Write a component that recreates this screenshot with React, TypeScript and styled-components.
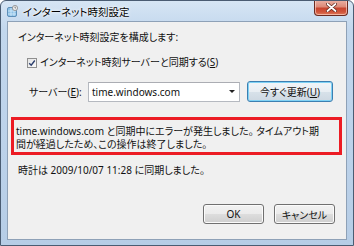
import styled, { createGlobalStyle } from "styled-components";

const GlobalStyle = createGlobalStyle`
  html, body {
    margin: 0;
    padding: 0;
    background: #ffffff;
  }
  body {
    font-family: "Noto Sans", "Noto Sans CJK JP", sans-serif;
    font-size: 10px;
    color: #111;
    font-feature-settings: "palt";
  }
`;

const Window = styled.div`
  box-sizing: border-box;
  width: 354px;
  height: 246px;
  border: 1px solid #4a5c72;
  border-radius: 6px 6px 0 0;
  background: linear-gradient(180deg, #d6e5f4 0%, #c2d7ed 12%, #bcd2ea 60%, #b6cde6 100%);
  display: flex;
  flex-direction: column;
  overflow: hidden;
`;

const TitleBar = styled.div`
  height: 20px;
  display: flex;
  align-items: center;
  padding-left: 6px;
`;

const TitleText = styled.span`
  margin-left: 5px;
  font-size: 10.5px;
  color: #000;
  text-shadow: 0 0 4px #ffffff, 0 0 2px #ffffff;
`;

const CloseButton = styled.div`
  box-sizing: border-box;
  margin-left: auto;
  margin-right: 5px;
  align-self: flex-start;
  margin-top: -1px;
  width: 34px;
  height: 16px;
  border: 1px solid #6b2a20;
  border-top: none;
  border-radius: 0 0 4px 4px;
  background: linear-gradient(180deg, #eab2a5 0%, #dd8a78 45%, #c8452f 55%, #d0553b 80%, #e07c5c 100%);
  box-shadow: inset 0 0 0 1px rgba(255, 220, 210, 0.6);
  display: flex;
  align-items: center;
  justify-content: center;
`;

const Client = styled.div`
  flex: 1;
  margin: 0 6px 5px 6px;
  border: 1px solid #8ea1b7;
  background: #f0f0f0;
  padding: 9px 5px 0 10px;
  display: flex;
  flex-direction: column;
`;

const Line = styled.div`
  line-height: 13px;
  white-space: nowrap;
`;

const CheckRow = styled.label`
  margin-top: 12px;
  padding-left: 9px;
  display: flex;
  align-items: center;
  line-height: 13px;
`;

const CheckBox = styled.span`
  box-sizing: border-box;
  width: 10px;
  height: 10px;
  border: 1px solid #8f8f8f;
  background: linear-gradient(135deg, #e4e4e4, #fafafa);
  margin-right: 3px;
  display: flex;
  align-items: center;
  justify-content: center;
`;

const ServerRow = styled.div`
  margin-top: 12px;
  padding-left: 11px;
  display: flex;
  align-items: center;
  height: 21px;
`;

const FieldLabel = styled.span`
  width: 59px;
  flex: none;
  white-space: nowrap;
`;

const Combo = styled.div`
  box-sizing: border-box;
  width: 152px;
  height: 20px;
  border: 1px solid #b5b9c0;
  border-top-color: #abadb3;
  background: #fff;
  display: flex;
  align-items: center;
  padding-left: 3px;
`;

const Arrow = styled.span`
  margin-left: auto;
  margin-right: 4px;
  width: 0;
  height: 0;
  border-left: 3px solid transparent;
  border-right: 3px solid transparent;
  border-top: 3px solid #222;
`;

const Button = styled.div<{ $width: number; $default?: boolean }>`
  box-sizing: border-box;
  width: ${(p) => p.$width}px;
  height: ${(p) => (p.$default ? 21 : 20)}px;
  border: 1px solid ${(p) => (p.$default ? "#3c7fb1" : "#707070")};
  border-radius: 3px;
  background: ${(p) =>
    p.$default
      ? "linear-gradient(180deg, #f2f5f8 0%, #e8eef3 50%, #d8e2ea 50%, #cdd8e2 100%)"
      : "linear-gradient(180deg, #f2f2f2 0%, #ebebeb 50%, #dddddd 50%, #cfcfcf 100%)"};
  box-shadow: inset 0 0 0 1px ${(p) => (p.$default ? "#7fd2f5" : "#fbfbfb")};
  display: flex;
  align-items: center;
  justify-content: center;
  white-space: nowrap;
`;

const UpdateButton = styled(Button)`
  margin-left: 7px;
`;

const ErrorBox = styled.div`
  margin: 15px -1px 0 -7px;
  border: 3px solid #ec1c24;
  padding: 5px 2px 1px 2px;
  line-height: 13px;
  white-space: nowrap;
`;

const ClockLine = styled(Line)`
  margin-top: 9px;
`;

const ButtonRow = styled.div`
  margin-top: 27px;
  margin-right: 6px;
  display: flex;
  justify-content: flex-end;
  gap: 10px;
`;

const u = { textDecoration: "underline" };

const TitleIcon = () => (
  <svg width="11" height="12" viewBox="0 0 11 12">
    <rect x="0.5" y="2.5" width="9" height="9" rx="1.5" fill="#8cc0e6" stroke="#5d8fb8" />
    <path d="M1 6h8M1 9h8M4 3v8M7 3v8" stroke="#d6ecfa" strokeWidth="0.8" />
    <circle cx="8" cy="3" r="2.6" fill="#e8e8e8" stroke="#8a8a8a" strokeWidth="0.8" />
    <path d="M8 1.6V3h1" stroke="#555" strokeWidth="0.6" fill="none" />
  </svg>
);

const CloseIcon = () => (
  <svg width="11" height="9" viewBox="0 0 11 9">
    <path d="M1.5 1L9.5 8M9.5 1L1.5 8" stroke="#5a2318" strokeWidth="3.2" strokeLinecap="round" />
    <path d="M1.5 1L9.5 8M9.5 1L1.5 8" stroke="#ffffff" strokeWidth="1.8" strokeLinecap="round" />
  </svg>
);

const CheckMark = () => (
  <svg width="8" height="8" viewBox="0 0 8 8">
    <path d="M1.2 4.2L3.2 6.2L6.8 1.5" stroke="#2c3f6e" strokeWidth="1.4" fill="none" />
  </svg>
);

const App = () => {
  return (
    <>
      <GlobalStyle />
      <Window>
        <TitleBar>
          <TitleIcon />
          <TitleText>インターネット時刻設定</TitleText>
          <CloseButton>
            <CloseIcon />
          </CloseButton>
        </TitleBar>
        <Client>
          <Line>インターネット時刻設定を構成します:</Line>
          <CheckRow>
            <CheckBox>
              <CheckMark />
            </CheckBox>
            インターネット時刻サーバーと同期する(<span style={u}>S</span>)
          </CheckRow>
          <ServerRow>
            <FieldLabel>
              サーバー(<span style={u}>E</span>):
            </FieldLabel>
            <Combo>
              time.windows.com
              <Arrow />
            </Combo>
            <UpdateButton $width={86} $default>
              今すぐ更新(<span style={u}>U</span>)
            </UpdateButton>
          </ServerRow>
          <ErrorBox>
            time.windows.com と同期中にエラーが発生しました。 タイムアウト期
            <br />
            間が経過したため、この操作は終了しました。
          </ErrorBox>
          <ClockLine>時計は 2009/10/07 11:28 に同期しました。</ClockLine>
          <ButtonRow>
            <Button $width={61}>OK</Button>
            <Button $width={61}>キャンセル</Button>
          </ButtonRow>
        </Client>
      </Window>
    </>
  );
};

export default App;
